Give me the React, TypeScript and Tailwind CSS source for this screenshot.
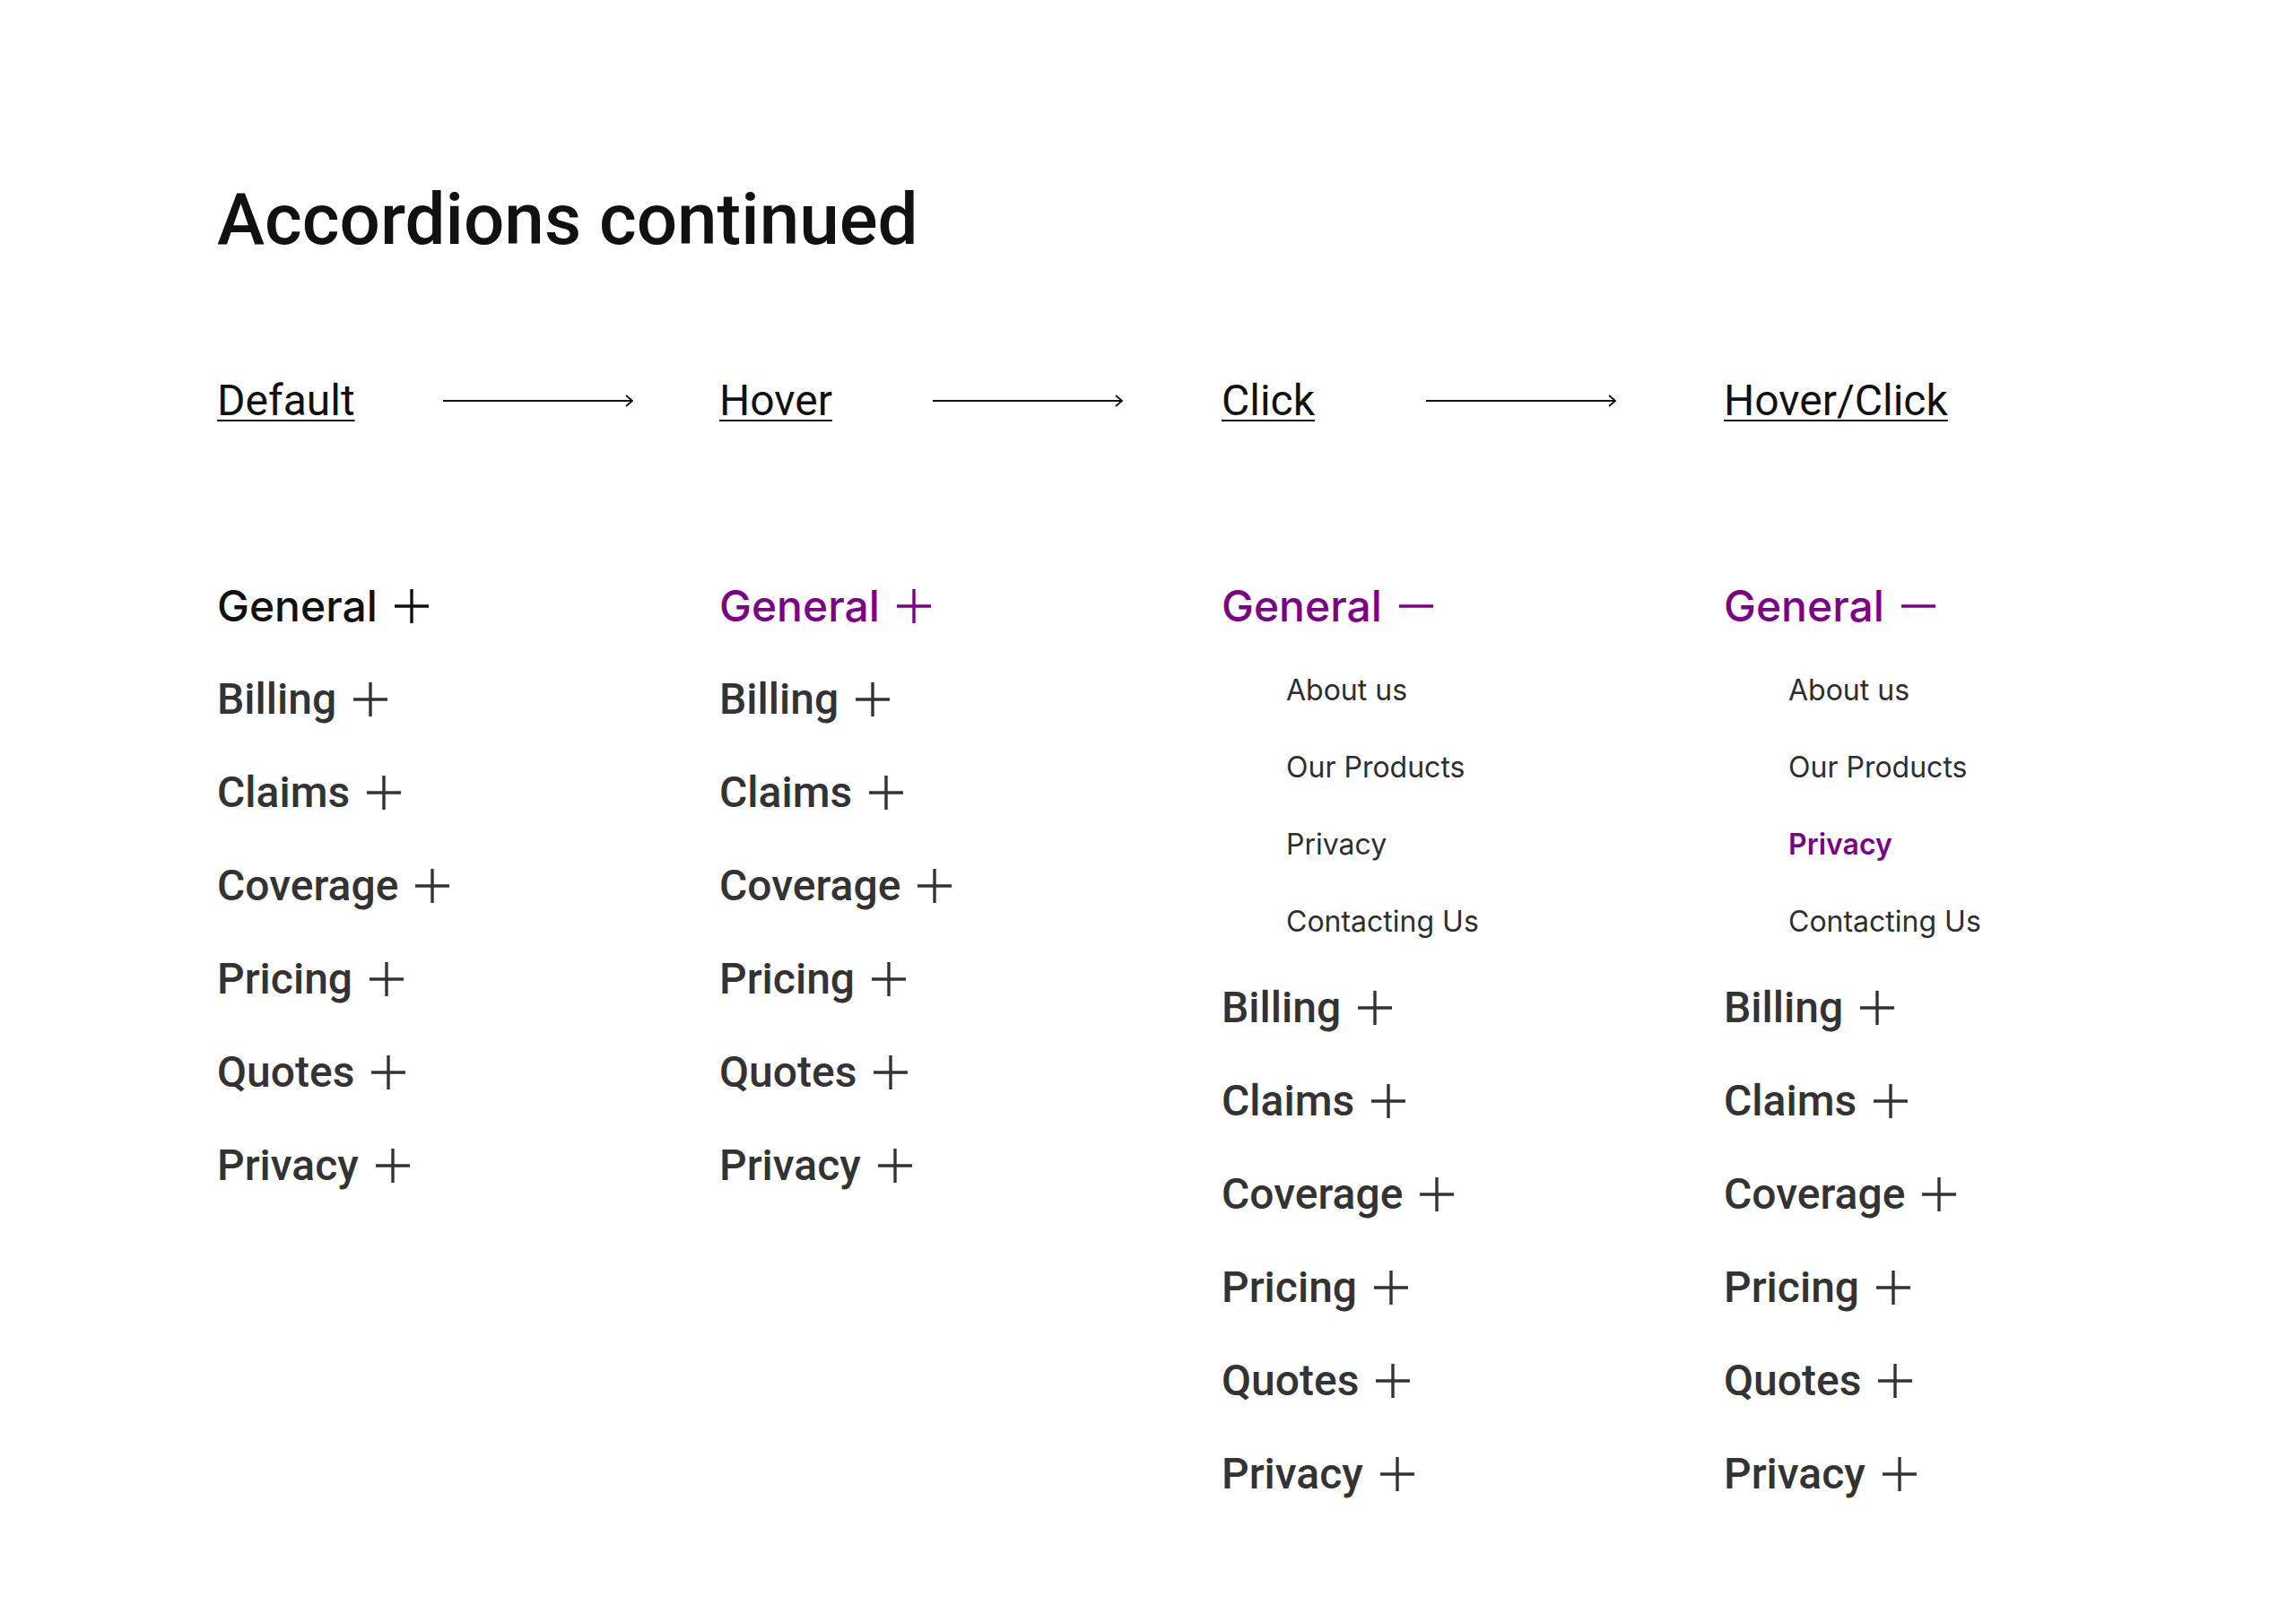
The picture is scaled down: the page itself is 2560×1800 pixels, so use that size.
import React from "react";

const PURPLE = "#780385";

function PlusIcon({ color }: { color: string }) {
  return (
    <svg width="38" height="38" viewBox="0 0 38 38" className="shrink-0">
      <line x1="19" y1="0" x2="19" y2="38" stroke={color} strokeWidth="3.4" />
      <line x1="0" y1="19" x2="38" y2="19" stroke={color} strokeWidth="3.4" />
    </svg>
  );
}

function MinusIcon({ color }: { color: string }) {
  return (
    <svg width="38" height="38" viewBox="0 0 38 38" className="shrink-0">
      <line x1="0" y1="19" x2="38" y2="19" stroke={color} strokeWidth="3.4" />
    </svg>
  );
}

function Arrow() {
  return (
    <svg width="214" height="16" viewBox="0 0 214 16" className="shrink-0">
      <line x1="0" y1="8" x2="211" y2="8" stroke="#111111" strokeWidth="2" />
      <path d="M204 2 L211 8 L204 14" fill="none" stroke="#111111" strokeWidth="1.8" />
    </svg>
  );
}

const rest = ["Billing", "Claims", "Coverage", "Pricing", "Quotes", "Privacy"];
const subs = ["About us", "Our Products", "Privacy", "Contacting Us"];

function Row({
  label,
  color,
  icon,
  inter,
}: {
  label: string;
  color: string;
  icon: "plus" | "minus";
  inter?: boolean;
}) {
  return (
    <div className="flex h-[56px] items-center">
      <span
        className={
          inter
            ? "font-['Inter',sans-serif] text-[48px] leading-[56px] font-medium"
            : "text-[48px] leading-[56px] font-medium"
        }
        style={{ color }}
      >
        {label}
      </span>
      <span className="ml-[19px] flex items-center">
        {icon === "plus" ? <PlusIcon color={color} /> : <MinusIcon color={color} />}
      </span>
    </div>
  );
}

function Column({ state }: { state: "default" | "hover" | "click" | "hoverclick" }) {
  const open = state === "click" || state === "hoverclick";
  const generalColor = state === "default" ? "#111111" : PURPLE;
  return (
    <div className="flex flex-col gap-[48px]">
      <div className="flex flex-col">
        <Row label="General" color={generalColor} icon={open ? "minus" : "plus"} inter />
        {open && (
          <div className="mt-[46px] flex flex-col gap-[46px] pl-[72px] font-['Inter',sans-serif]">
            {subs.map((s) => {
              const hi = state === "hoverclick" && s === "Privacy";
              return (
                <div
                  key={s}
                  className={
                    hi
                      ? "h-[40px] text-[32px] leading-[40px] font-semibold text-[#780385]"
                      : "h-[40px] text-[32px] leading-[40px] font-normal text-[#2e2e2e]"
                  }
                >
                  {s}
                </div>
              );
            })}
          </div>
        )}
      </div>
      {rest.map((r) => (
        <Row key={r} label={r} color="#333333" icon="plus" />
      ))}
    </div>
  );
}

export default function App() {
  return (
    <div className="w-[2560px] h-[1800px] bg-white pl-[242px] pt-[205px] font-['Roboto',sans-serif] text-[#111111]">
      <h1 className="text-[80px] leading-[80px] font-medium text-[#111111]">
        Accordions continued
      </h1>

      <div className="mt-[134px] grid grid-cols-[560px_560px_560px_560px]">
        <div className="flex h-[56px] items-center">
          <span className="w-[252px] shrink-0 text-[48px] leading-[56px] underline decoration-2 underline-offset-[5px]">
            Default
          </span>
          <Arrow />
        </div>
        <div className="flex h-[56px] items-center">
          <span className="w-[238px] shrink-0 text-[48px] leading-[56px] underline decoration-2 underline-offset-[5px]">
            Hover
          </span>
          <Arrow />
        </div>
        <div className="flex h-[56px] items-center">
          <span className="w-[228px] shrink-0 text-[48px] leading-[56px] underline decoration-2 underline-offset-[5px]">
            Click
          </span>
          <Arrow />
        </div>
        <div className="flex h-[56px] items-center">
          <span className="text-[48px] leading-[56px] underline decoration-2 underline-offset-[5px]">
            Hover/Click
          </span>
        </div>
      </div>

      <div className="mt-[173px] grid grid-cols-[560px_560px_560px_560px] items-start">
        <Column state="default" />
        <Column state="hover" />
        <Column state="click" />
        <Column state="hoverclick" />
      </div>
    </div>
  );
}
